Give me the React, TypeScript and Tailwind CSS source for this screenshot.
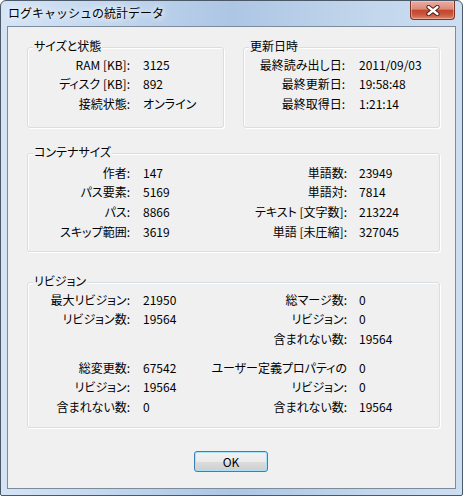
import type { ReactNode } from "react";

type Pair = [string, string];

function CloseButton() {
  return (
    <div className="mr-[1px] flex h-[19px] w-[45px] items-center justify-center rounded-b-[4px] border border-t-0 border-[#7e3328] bg-[linear-gradient(180deg,#e9ada0_0%,#dc8b7b_45%,#c4462f_52%,#c9563d_75%,#df8468_100%)] shadow-[inset_0_0_0_1px_rgba(255,220,210,0.45)]">
      <svg width="14" height="11" viewBox="0 0 14 11">
        <path d="M2.5 2 L11.5 9 M11.5 2 L2.5 9" stroke="#4f1d16" strokeWidth="4.2" strokeLinecap="round" />
        <path d="M2.5 2 L11.5 9 M11.5 2 L2.5 9" stroke="#ffffff" strokeWidth="2.3" strokeLinecap="round" />
      </svg>
    </div>
  );
}

function GroupBox({ title, className, children }: { title: string; className: string; children: ReactNode }) {
  return (
    <fieldset
      className={`rounded-[3px] border border-[#d5dfe5] shadow-[inset_1px_1px_0_#fff,1px_1px_0_#fff] ${className}`}
    >
      <legend className="ml-[5px] bg-[#f0f0f0] px-[1px] pb-[2px] leading-[14px]">{title}</legend>
      {children}
    </fieldset>
  );
}

function TwoCol({ rows, labelW, gap }: { rows: Pair[]; labelW: string; gap: string }) {
  return (
    <div className={`grid ${labelW} auto-rows-[19.67px] items-center`}>
      {rows.map(([l, v]) => (
        <div key={l} className="contents">
          <div className="whitespace-nowrap text-right">{l}</div>
          <div className={`whitespace-nowrap ${gap}`}>{v}</div>
        </div>
      ))}
    </div>
  );
}

function FourCol({ rows }: { rows: [string, string, string, string][] }) {
  return (
    <div className="grid grid-cols-[102px_97px_120px_1fr] auto-rows-[19.67px] items-center">
      {rows.map(([a, b, c, d], i) => (
        <div key={i} className="contents">
          <div className="whitespace-nowrap text-right">{a}</div>
          <div className="whitespace-nowrap pl-[13px]">{b}</div>
          <div className="flex justify-end whitespace-nowrap">{c}</div>
          <div className="whitespace-nowrap pl-[12px]">{d}</div>
        </div>
      ))}
    </div>
  );
}

export default function App() {
  return (
    <div className="h-[496px] w-[463px] font-['Noto_Sans_CJK_JP',sans-serif] text-[12px] leading-[14px] text-black">
      <div className="flex h-full w-full flex-col rounded-t-[6px] rounded-b-[2px] border border-[#4a5867] bg-[linear-gradient(90deg,#d5e4f5_0%,#bdd3ec_30%,#adc6e4_50%,#bfd4eb_75%,#cddef1_100%)] px-[6px] pb-[6px]">
        <div className="flex h-[25px] shrink-0 items-start justify-between">
          <div className="pl-[1px] pt-[5px] [text-shadow:0_0_6px_#fff,0_0_10px_#fff]">ログキャッシュの統計データ</div>
          <CloseButton />
        </div>

        <div className="flex flex-1 flex-col border border-[#7c8b9b] bg-[#f0f0f0] pl-[19px] pr-[15px] pt-[12px] [font-feature-settings:'palt']">
          <div className="flex gap-[19px]">
            <GroupBox title="サイズと状態" className="h-[89px] w-[197px]">
              <TwoCol
                labelW="grid-cols-[102px_1fr]"
                gap="pl-[13px]"
                rows={[
                  ["RAM [KB]:", "3125"],
                  ["ディスク [KB]:", "892"],
                  ["接続状態:", "オンライン"],
                ]}
              />
            </GroupBox>
            <GroupBox title="更新日時" className="h-[89px] w-[197px]">
              <TwoCol
                labelW="grid-cols-[101px_1fr]"
                gap="pl-[14px]"
                rows={[
                  ["最終読み出し日:", "2011/09/03"],
                  ["最終更新日:", "19:58:48"],
                  ["最終取得日:", "1:21:14"],
                ]}
              />
            </GroupBox>
          </div>

          <GroupBox title="コンテナサイズ" className="mt-[17px] h-[107px] pt-[2px]">
            <FourCol
              rows={[
                ["作者:", "147", "単語数:", "23949"],
                ["パス要素:", "5169", "単語対:", "7814"],
                ["パス:", "8866", "テキスト [文字数]:", "213224"],
                ["スキップ範囲:", "3619", "単語 [未圧縮]:", "327045"],
              ]}
            />
          </GroupBox>

          <GroupBox title="リビジョン" className="mt-[22px] h-[154px]">
            <FourCol
              rows={[
                ["最大リビジョン:", "21950", "総マージ数:", "0"],
                ["リビジョン数:", "19564", "リビジョン:", "0"],
                ["", "", "含まれない数:", "19564"],
              ]}
            />
            <div className="mt-[9px]">
              <FourCol
                rows={[
                  ["総変更数:", "67542", "ユーザー定義プロパティの", "0"],
                  ["リビジョン:", "19564", "リビジョン:", "0"],
                  ["含まれない数:", "0", "含まれない数:", "19564"],
                ]}
              />
            </div>
          </GroupBox>

          <div className="mt-[23px] flex pl-[167px]">
            <button className="flex h-[21px] w-[74px] items-center justify-center rounded-[3px] border border-[#3c7fb1] bg-[linear-gradient(180deg,#f2f2f2_0%,#ebebeb_50%,#dddddd_50%,#cfcfcf_100%)] shadow-[inset_0_0_0_1px_#a7e3f9]">
              OK
            </button>
          </div>
        </div>
      </div>
    </div>
  );
}
